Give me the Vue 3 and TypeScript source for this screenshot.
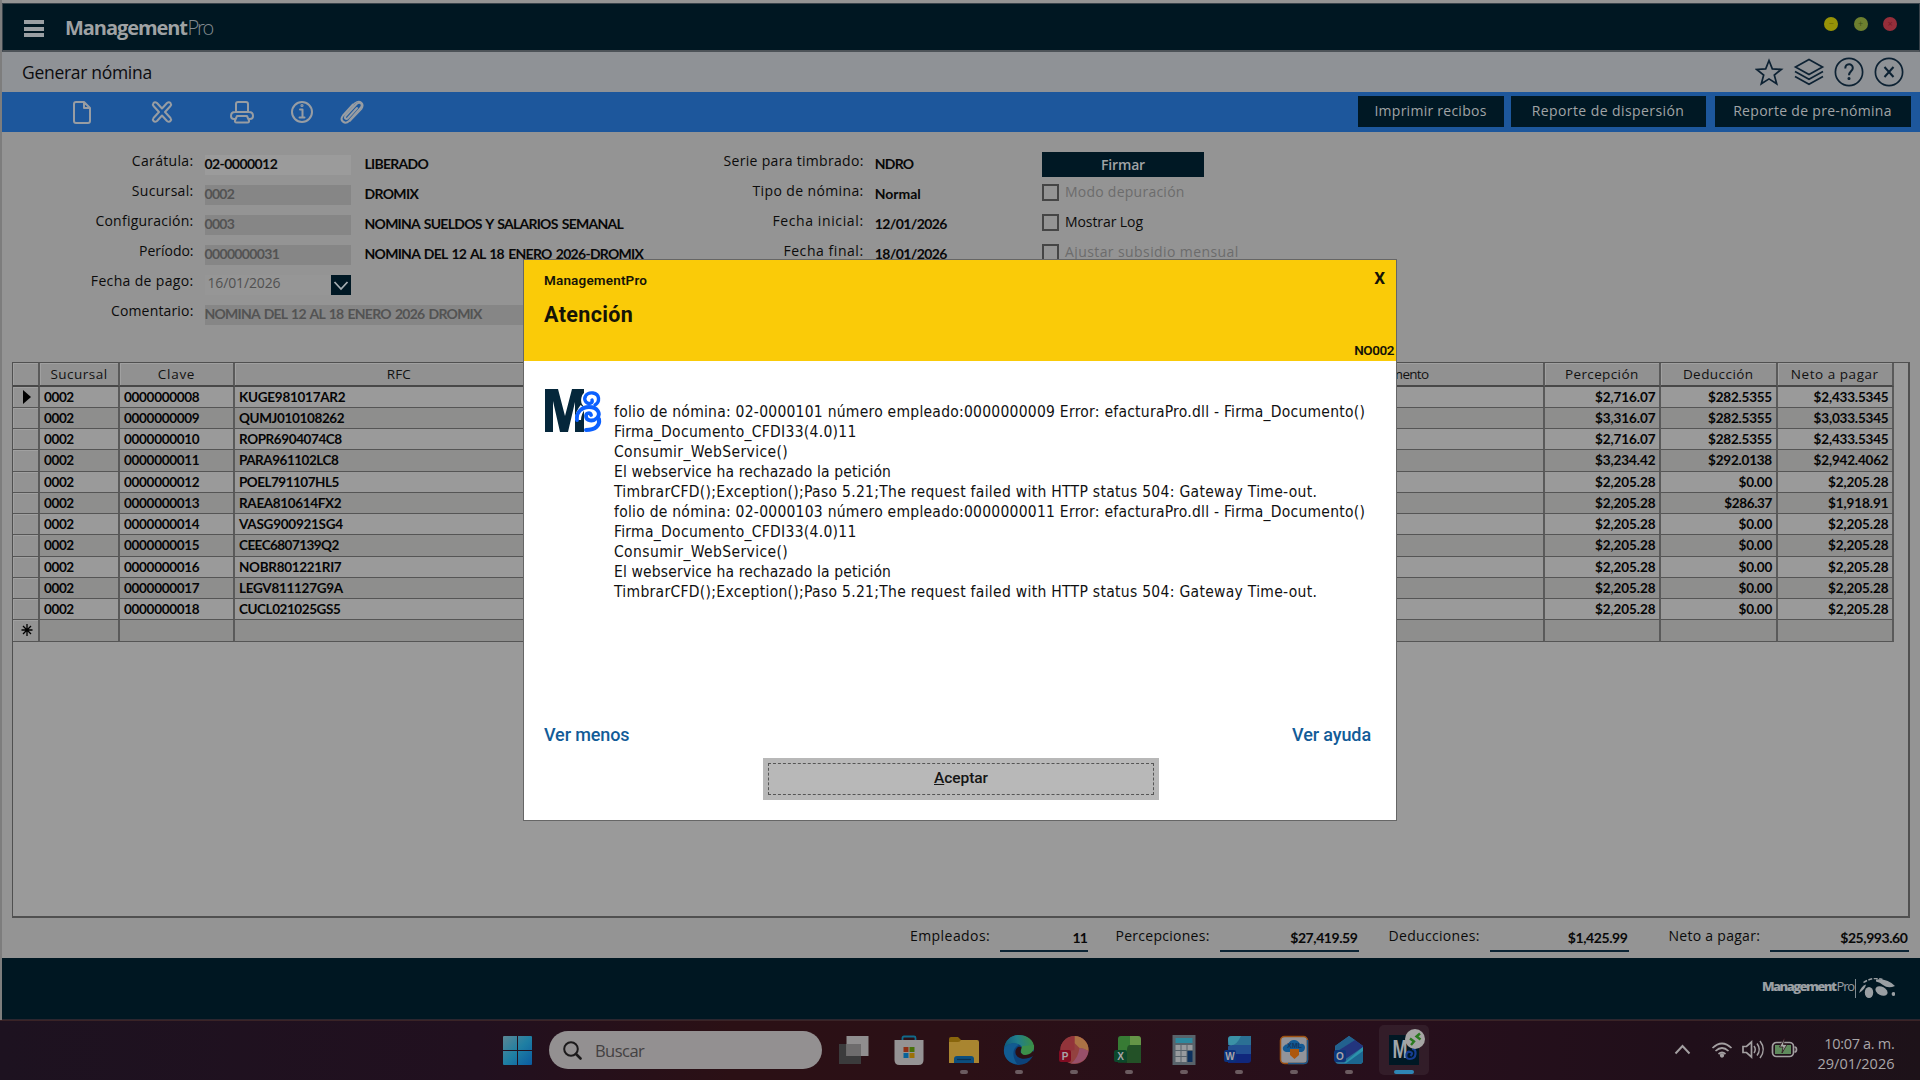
<script setup lang="ts">
interface Field { label: string; lw: number; value: string; vw: number; desc?: string; dw?: number; kind: string }
interface Pair { label: string; lw: number; value: string; vw: number }

// Spreads the letters of a text over the width given in pixels.
const vFit = {
  mounted(el: HTMLElement, binding: { value: number }) {
    const range = document.createRange()
    range.selectNodeContents(el)
    const natural = range.getBoundingClientRect().width
    const count = (el.textContent ?? '').length
    if (count > 1) el.style.letterSpacing = `${((binding.value - natural) / (count - 0.5)).toFixed(3)}px`
  },
}

const fields: Field[] = [
  { label: 'Carátula:', lw: 61.5, value: '02-0000012', vw: 73, desc: 'LIBERADO', dw: 64, kind: 'active' },
  { label: 'Sucursal:', lw: 61.5, value: '0002', vw: 30, desc: 'DROMIX', dw: 54, kind: 'off' },
  { label: 'Configuración:', lw: 98, value: '0003', vw: 30, desc: 'NOMINA SUELDOS Y SALARIOS SEMANAL', dw: 259, kind: 'off' },
  { label: 'Período:', lw: 54.5, value: '0000000031', vw: 75, desc: 'NOMINA DEL 12 AL 18 ENERO 2026-DROMIX', dw: 279, kind: 'off' },
  { label: 'Fecha de pago:', lw: 102.5, value: '16/01/2026', vw: 73, kind: 'date' },
  { label: 'Comentario:', lw: 82.5, value: 'NOMINA DEL 12 AL 18 ENERO 2026 DROMIX', vw: 277.5, kind: 'off wide' },
]
const series: Pair[] = [
  { label: 'Serie para timbrado:', lw: 140, value: 'NDRO', vw: 39 },
  { label: 'Tipo de nómina:', lw: 111, value: 'Normal', vw: 46 },
  { label: 'Fecha inicial:', lw: 91, value: '12/01/2026', vw: 72.5 },
  { label: 'Fecha final:', lw: 80, value: '18/01/2026', vw: 72.5 },
]
const checks = [
  { label: 'Modo depuración', w: 119.5, off: true },
  { label: 'Mostrar Log', w: 78, off: false },
  { label: 'Ajustar subsidio mensual', w: 173.5, off: true },
]
const reports = [
  { label: 'Imprimir recibos', w: 112, cls: 'r1' },
  { label: 'Reporte de dispersión', w: 152.5, cls: 'r2' },
  { label: 'Reporte de pre-nómina', w: 158.5, cls: 'r3' },
]
const rows: string[][] = [
  ['0000000008', 'KUGE981017AR2', '$2,716.07', '$282.5355', '$2,433.5345'],
  ['0000000009', 'QUMJ010108262', '$3,316.07', '$282.5355', '$3,033.5345'],
  ['0000000010', 'ROPR6904074C8', '$2,716.07', '$282.5355', '$2,433.5345'],
  ['0000000011', 'PARA961102LC8', '$3,234.42', '$292.0138', '$2,942.4062'],
  ['0000000012', 'POEL791107HL5', '$2,205.28', '$0.00', '$2,205.28'],
  ['0000000013', 'RAEA810614FX2', '$2,205.28', '$286.37', '$1,918.91'],
  ['0000000014', 'VASG900921SG4', '$2,205.28', '$0.00', '$2,205.28'],
  ['0000000015', 'CEEC6807139Q2', '$2,205.28', '$0.00', '$2,205.28'],
  ['0000000016', 'NOBR801221RI7', '$2,205.28', '$0.00', '$2,205.28'],
  ['0000000017', 'LEGV811127G9A', '$2,205.28', '$0.00', '$2,205.28'],
  ['0000000018', 'CUCL021025GS5', '$2,205.28', '$0.00', '$2,205.28'],
]
const rfcWidths = [106.5, 105.5, 103, 99.5, 100, 102.5, 104, 100, 102.5, 104, 101.5]
const totals = [
  { label: 'Empleados:', lw: 80, value: '11', vw: 15, cls: 't1' },
  { label: 'Percepciones:', lw: 94, value: '$27,419.59', vw: 67.5, cls: 't2' },
  { label: 'Deducciones:', lw: 91, value: '$1,425.99', vw: 60, cls: 't3' },
  { label: 'Neto a pagar:', lw: 91.5, value: '$25,993.60', vw: 67.5, cls: 't4' },
]
const block = (folio: string, emp: string) => [
  { t: `folio de nómina: 02-${folio} número empleado:${emp} Error: efacturaPro.dll - Firma_Documento()`, w: 751 },
  { t: 'Firma_Documento_CFDI33(4.0)11', w: 242.5 },
  { t: 'Consumir_WebService()', w: 174 },
  { t: 'El webservice ha rechazado la petición', w: 277 },
  { t: 'TimbrarCFD();Exception();Paso 5.21;The request failed with HTTP status 504: Gateway Time-out.', w: 703 },
]
const messages = [...block('0000101', '0000000009'), ...block('0000103', '0000000011')]
const money = (s: string) => (s.length === 5 ? 33.5 : s.length === 7 ? 48 : s.length === 9 && s[2] !== ',' ? 64 : s.length === 9 ? 60.5 : 75)
</script>

<template>
  <div class="screen">
    <div class="app">
      <header class="head">
        <div class="burger"><i></i><i></i><i></i></div>
        <div class="brand"><b v-fit="122.5">Management</b><span v-fit="25.5">Pro</span></div>
        <div class="dots"><i class="y">−</i><i class="g">+</i><i class="r">×</i></div>
      </header>

      <div class="titlebar">
        <span v-fit="130" class="title">Generar nómina</span>
        <svg class="tico" width="150" height="32" viewBox="0 0 150 32" fill="none" stroke="#0d2233" stroke-width="1.7">
          <path d="M14 4.500l3.300 8.400 9 .5-7 5.600 2.400 8.800L14 22.900l-7.700 4.900L8.700 19l-7-5.600 9-.5z" />
          <path d="M54 3.500l13.500 7.500L54 18.500 40.500 11z" />
          <path d="M40 15.500l14 7.700 14-7.700M40 20.500l14 7.700 14-7.700" />
          <circle cx="94" cy="16" r="13.600" /><circle cx="134" cy="16" r="13.600" />
          <path d="M90.300 12.500c0-5.500 7.500-5.500 7.500-.6 0 3.300-3.800 3.500-3.800 7.300" stroke-width="2" /><circle cx="94" cy="22.500" r=".7" />
          <path d="M129.500 11l9 10M138.500 11l-9 10" stroke-width="2" />
        </svg>
      </div>

      <div class="toolbar">
        <svg width="300" height="40" viewBox="0 0 300 40" fill="none" stroke="#989da3" stroke-width="2" stroke-linejoin="round" stroke-linecap="round">
          <path d="M4 10h8l6 6v13q0 2-2 2H4q-2 0-2-2V12q0-2 2-2zM12 10v6h6" />
          <path d="M85 11l5 5.500 5-5.500q2-1.500 3.500 0 1.200 1.500 0 3L93 20l5.500 6q1.200 1.500 0 3-1.500 1.500-3.500 0l-5-5.500-5 5.500q-2 1.500-3.500 0-1.200-1.500 0-3l5.500-6-5.500-6q-1.200-1.500 0-3 1.500-1.500 3.500 0z" />
          <path d="M164 20v-8q0-2 2-2h8q2 0 2 2v8M163 27h-1q-3 0-3-3 0-4 4-4h14q4 0 4 4 0 3-3 3h-1M165 24h10l2 4.500q.5 2-1.500 2h-11q-2 0-1.500-2z" />
          <circle cx="230" cy="20" r="10" /><path d="M228 17.500h2.500V25M227.500 25.500h5" /><circle cx="230" cy="13.500" r=".6" />
          <g transform="translate(-3 0)"><path d="M288 16l-9 10c-2 2-4 0-2.500-2l11-12c3-3 7 0 4.500 3.500L280 29c-4 4-10-.5-6-5.500l10-11" />
          <path d="M282.500 14.500l3.500-3.500c5-4 10 1 6.500 6L281 29" stroke-width="1.500" /></g>
        </svg>
        <div class="reports">
          <button v-for="r in reports" :key="r.label" :class="r.cls"><span v-fit="r.w">{{ r.label }}</span></button>
        </div>
      </div>

      <section class="form">
        <div class="col1">
          <div v-for="f in fields" :key="f.label" class="frow">
            <label><span v-fit="f.lw">{{ f.label }}</span></label>
            <div class="input" :class="f.kind"><span v-fit="f.vw">{{ f.value }}</span>
              <i v-if="f.kind === 'date'" class="drop"><svg width="20" height="20" viewBox="0 0 20 20" fill="none" stroke="#a5adb2" stroke-width="1.800"><path d="M3.500 7l6.500 7 6.500-7" /></svg></i>
            </div>
            <strong v-if="f.desc"><span v-fit="f.dw ?? 0">{{ f.desc }}</span></strong>
          </div>
        </div>
        <div class="col2">
          <div v-for="s in series" :key="s.label" class="frow">
            <label><span v-fit="s.lw">{{ s.label }}</span></label>
            <strong><span v-fit="s.vw">{{ s.value }}</span></strong>
          </div>
        </div>
        <div class="col3">
          <button class="sign"><span v-fit="44">Firmar</span></button>
          <div v-for="c in checks" :key="c.label" class="check" :class="{ dim: c.off }"><i></i><span v-fit="c.w">{{ c.label }}</span></div>
        </div>
      </section>

      <section class="box">
        <div class="grid">
          <div class="tr th">
            <div></div><div><span v-fit="57">Sucursal</span></div><div><span v-fit="37">Clave</span></div><div><span v-fit="24">RFC</span></div><div></div>
            <div><span v-fit="84">Departamento</span></div><div><span v-fit="73.5">Percepción</span></div><div><span v-fit="70.5">Deducción</span></div><div><span v-fit="87.5">Neto a pagar</span></div>
          </div>
          <div v-for="(r, i) in rows" :key="r[0]" class="tr">
            <div class="sel"><svg v-if="i === 0" width="8" height="14" viewBox="0 0 8 14"><path d="M0 0l8 7-8 7z" /></svg></div>
            <div><span v-fit="30">0002</span></div><div><span v-fit="75.5">{{ r[0] }}</span></div><div><span v-fit="rfcWidths[i]">{{ r[1] }}</span></div><div></div><div></div>
            <div v-for="k in [2, 3, 4]" :key="k" class="num"><span v-fit="money(r[k])">{{ r[k] }}</span></div>
          </div>
          <div class="tr">
            <div class="sel"><svg width="12" height="12" viewBox="0 0 12 12" stroke="#000" stroke-width="1.300"><path d="M6 0v12M.5 6h11M2 2l8 8M10 2l-8 8" /></svg></div>
            <div v-for="n in 8" :key="n"></div>
          </div>
        </div>
      </section>

      <section class="totals">
        <div v-for="t in totals" :key="t.label" class="total" :class="t.cls">
          <label><span v-fit="t.lw">{{ t.label }}</span></label>
          <strong><span v-fit="t.vw">{{ t.value }}</span></strong>
        </div>
      </section>

      <footer class="foot">
        <div class="fbrand"><b v-fit="74">Management</b><span v-fit="18">Pro</span></div>
        <svg width="42" height="22" viewBox="0 0 42 22" fill="#9a9fa3">
          <path d="M2.500 1v19" stroke="#7f8b92" />
          <path d="M10.500 4.500q9-6 19-3" stroke="#9a9fa3" stroke-width="1.500" stroke-dasharray="4 1.500" fill="none" />
          <path d="M6 15q2-7 7-8.500-1 5-7 8.500z" />
          <ellipse cx="16" cy="14.500" rx="4.200" ry="5.500" /><ellipse cx="28.500" cy="13" rx="6.500" ry="4.300" transform="rotate(28 28.500 13)" />
          <path d="M23 1.500q11-1.500 19 6.500-7 3-12-1-3-3-7-3.500z" /><circle cx="40.500" cy="16" r="1.900" />
        </svg>
      </footer>
    </div>

    <nav class="taskbar">
      <svg class="start" width="29" height="29" viewBox="0 0 29 29"><defs><linearGradient id="win" x1="0" y1="0" x2="1" y2="1"><stop offset="0" stop-color="#5b8794" /><stop offset=".5" stop-color="#1f7fa3" /><stop offset="1" stop-color="#0a5ba0" /></linearGradient></defs><path fill="url(#win)" d="M0 1q0-1 1-1h13v14H0zM15 0h13q1 0 1 1v13H15zM0 15h14v14H1q-1 0-1-1zM15 15h14v13q0 1-1 1H15z" /></svg>
      <div class="search"><svg width="19" height="19" viewBox="0 0 19 19" fill="none" stroke="#1c1a1b" stroke-width="2"><circle cx="8" cy="8" r="6.800" /><path d="M13 13l4.500 4.500" stroke-width="2.600" stroke-linecap="round" /></svg><span v-fit="49.5">Buscar</span></div>
      <div class="tasks">
        <div class="task"><svg width="32" height="32" viewBox="0 0 32 32"><path d="M1 10h22v20H1z" fill="#3b3b3c" /><path d="M8.500 2h22v20h-22z" fill="#908e8f" /><path d="M8.500 10H23v12H8.500z" fill="#6e6c6d" /></svg></div>
        <div class="task"><svg width="32" height="32" viewBox="0 0 32 32"><path d="M9.500 7V4q0-1.500 1.500-1.500h10q1.500 0 1.500 1.500v3" fill="none" stroke="#116a8b" stroke-width="1.800" /><path d="M1.500 6h29v20q0 5-5 5h-19q-5 0-5-5z" fill="#959394" /><path d="M10.500 13h5v5h-5z" fill="#8f3015" /><path d="M16.500 13h5v5h-5z" fill="#48710a" /><path d="M10.500 19h5v5h-5z" fill="#09629a" /><path d="M16.500 19h5v5h-5z" fill="#9b7107" /></svg></div>
        <div class="task"><svg width="32" height="32" viewBox="0 0 32 32"><path d="M1 5q0-2 2-2h7l3 3v8H1z" fill="#88650c" /><path d="M1 8h9q2 0 3-2h16q2 0 2 2v21H1z" fill="#a98530" /><path d="M6 29v-4q0-3 3-3h14q3 0 3 3v4z" fill="#0c4e7d" /><path d="M9 25.500h14" stroke="#092f50" stroke-width="1.200" /></svg><i></i></div>
        <div class="task"><svg width="32" height="32" viewBox="0 0 32 32"><defs><linearGradient id="edge" x1="0" y1=".6" x2="1" y2=".4"><stop offset="0" stop-color="#0f577d" /><stop offset=".5" stop-color="#217e8b" /><stop offset="1" stop-color="#3c8f42" /></linearGradient></defs><circle cx="16" cy="16" r="15" fill="#0c427a" /><path d="M1 15C2 6 8 1 16 1c9 0 15 6 15 12 0 5-4 8-9 8-3 0-4-1-4-3 1-1 2-3 1-5C16 8 5 8 1 15z" fill="url(#edge)" /><path d="M15 13c-3 2-4 7 0 10 4 3 10 2 15-1l2-4-3-1c-3 4-9 3-11 2-1-2 0-3 1-5 0 0-1-2-4-1z" fill="#2b1016" /><path d="M18 17c0-2 1-4 1-5l12-1c1 6-4 10-9 10-3 0-4-2-4-4z" fill="#3c8f4a" /><path d="M1 15c3-6 12-7 15-4-6 2-8 10-2 19C5 30 0 22 1 15z" fill="#125b91" /></svg><i></i></div>
        <div class="task"><svg width="32" height="32" viewBox="0 0 32 32"><circle cx="16.500" cy="16" r="14" fill="#93413f" /><path d="M16.500 2a14 14 0 0 1 14 15q-6-3-9-3l-5-5z" fill="#ab7245" /><path d="M5 8q5-6 11.500-6v14L3 19q-2-6 2-11z" fill="#93343a" /><path d="M13 29.500q7-5 8.500-15.500 4 0 9 3-2 13-17.500 12.500z" fill="#98506a" /><rect x="1" y="16" width="12" height="12" rx="2" fill="#810c22" /><text x="7" y="25.500">P</text></svg><i></i></div>
        <div class="task"><svg width="32" height="32" viewBox="0 0 32 32"><path d="M5 5q0-3 3-3h19v27H5z" fill="#153e22" /><path d="M5 5q0-3 3-3h9v18H5z" fill="#377b34" /><path d="M17 2h8q3 0 3 3v6H17z" fill="#659447" /><path d="M17 11h11v18H14V16q0-5 3-5z" fill="#235127" /><rect x="1" y="16" width="13" height="12" rx="2" fill="#0c482c" /><text x="7.500" y="25.500">X</text></svg><i></i></div>
        <div class="task"><svg width="32" height="32" viewBox="0 0 32 32"><path d="M4.500 1h23v30h-23z" fill="#58636b" /><path d="M7.500 4h17v5h-17z" fill="#2d899f" /><path d="M7.500 11h5v5h-5zM13.500 11h5v5h-5zM19.500 11h5v5h-5zM7.500 17h5v5h-5zM13.500 17h5v5h-5zM7.500 23h5v5h-5zM13.500 23h5v5h-5z" fill="#989b9e" /><path d="M19.500 17h5v11h-5z" fill="#0c315e" /></svg><i></i></div>
        <div class="task"><svg width="32" height="32" viewBox="0 0 32 32"><path d="M5 5q0-3 3-3h20v9H5z" fill="#2b7094" /><path d="M5 20V13q0-2 3-2h20v9z" fill="#224f91" /><path d="M5 20h23v6q0 3-3 3H5z" fill="#10277c" /><path d="M6 11q7 2 12-9H9q-4 0-4 4z" fill="#3b91a6" /><rect x="1" y="16" width="12" height="12" rx="2" fill="#0b317c" /><text x="7" y="25.500">W</text></svg><i></i></div>
        <div class="task"><svg width="32" height="32" viewBox="0 0 32 32"><rect x="2.500" y="2.500" width="27" height="27" rx="4" fill="#92949a" stroke="#9d5010" stroke-width="1.500" /><path d="M10 29.500h16q3.500 0 3.500-3.500V6" fill="none" stroke="#1a568b" stroke-width="1.500" /><path d="M8 18q-4-1-3-5 2-3 5-3 2-4 6-4t6 4q4-1 5 3 0 4-3 5z" fill="#135a94" /><path d="M12 15h9v6l-4.500 4-4.500-4z" fill="#ad570c" /><text x="16.500" y="14" class="xml">XML</text></svg><i></i></div>
        <div class="task"><svg width="32" height="32" viewBox="0 0 32 32"><path d="M2 12L16 2l14 10v14q0 4-4 4H6q-4 0-4-4z" fill="#2b6d96" /><path d="M2 12L16 2l6 4L3 18z" fill="#22618e" /><path d="M3 18L22 6l8 6v1L11 26z" fill="#23357e" /><path d="M11 29l19-16v13q0 4-4 4z" fill="#2b93ac" /><path d="M12 30l18-13v9q0 4-4 4z" fill="#1c6690" /><rect x="1" y="16" width="12" height="12" rx="2" fill="#0c377c" /><text x="7" y="25.500">O</text></svg><i></i></div>
        <div class="task running"><svg width="50" height="49" viewBox="0 0 50 49"><path d="M10 10h30v30H10z" fill="#001824" /><text x="21" y="33" class="em" textLength="15" lengthAdjust="spacingAndGlyphs">M</text><path d="M33 24q4 0 3.500 5t-6 5q-4 0-3-5 1-3 4-2t0 4" fill="none" stroke="#163e94" stroke-width="2.200" /><circle cx="36" cy="14" r="10" fill="#a5a5a4" /><path d="M31 13.500l4 3-3 3.500M41 8.500l-3.500 3 4 3" fill="none" stroke="#2a7a1f" stroke-width="2.400" /></svg><i></i></div>
      </div>
      <div class="tray">
        <svg width="125" height="24" viewBox="0 0 125 24" fill="none" stroke="#a39fa1" stroke-width="1.700">
          <path d="M1.500 16.500l7-7.500 7 7.500" stroke-width="2" />
          <path d="M38.500 11q9.500-9 19 0M41.500 14q6.500-6 13 0M44.500 17q3.500-3 7 0" /><circle cx="48" cy="18.500" r="1.300" fill="#a39fa1" />
          <path d="M69 9.500h3.500l5-4.500v15l-5-4.500H69z" /><path d="M80 9q2.500 3.500 0 7M83 6.500q4.500 6 0 12M86 4q6.500 8.500 0 17" stroke-width="1.500" />
          <rect x="98.500" y="5.500" width="21" height="14" rx="4" /><path d="M120.500 10q2 0 2 2.500t-2 2.500" /><path d="M101 8h16v9h-16z" fill="#5f8a5c" stroke="none" /><path d="M110.500 1l-5 9h3.500l-1 6 5-8.500h-3.500z" fill="#a7a9a5" stroke="#2a1019" stroke-width=".8" />
        </svg>
        <div class="clock"><span v-fit="70.5">10:07 a. m.</span><span v-fit="77">29/01/2026</span></div>
      </div>
    </nav>

    <div class="dialog">
      <div class="dhead">
        <div class="dtop"><span v-fit="103">ManagementPro</span><span class="close">X</span></div>
        <h2><span v-fit="89">Atención</span></h2>
        <div class="code"><span v-fit="40">NO002</span></div>
      </div>
      <div class="dbody">
        <svg width="57" height="44" viewBox="0 0 57 44"><path d="M0 0h13l7 27 7-27h12v43h-9V13l-7 30h-8L8 12v31H0z" fill="#05273b" /><path d="M30 43V24l8-7v26z" fill="#05273b" />
          <g fill="none" stroke="#fff" stroke-width="6"><path d="M53 15c3-6-2-12-8-11-6 1-8 9-3 12 4 2 8-2 5-5" /><path d="M38 18q-5 6-5 13" /></g>
          <g fill="none" stroke="#0b60ff" stroke-linecap="round"><path d="M50 16c5-3 5-11-2-12-7-1-10 5-7 9 3 3 7 1 6-2" stroke-width="3.400" /><path d="M32 31c-1-8 5-13 12-13 9 0 12 7 8 11-4 4-11 3-11-2 0-3 4-4 5-1" stroke-width="3.800" /><path d="M54 30c1 6-3 11-13 11" stroke-width="4" /></g></svg>
        <div class="msg"><div v-for="(m, i) in messages" :key="i"><span v-fit="m.w">{{ m.t }}</span></div></div>
      </div>
      <div class="links"><a v-fit="85.5">Ver menos</a><a v-fit="79">Ver ayuda</a></div>
      <button class="ok"><span><em v-fit="54"><u>A</u>ceptar</em></span></button>
    </div>
  </div>
</template>

<style>
html, body { margin: 0; background: #949494; overflow: hidden; }
</style>
<style scoped>
* { box-sizing: border-box; }
.screen { position: relative; width: 1920px; height: 1080px; overflow: hidden; font: 14px/20px "Open Sans", sans-serif; color: #0b0b0b; white-space: nowrap; }
button { border: 0; padding: 0; margin: 0; font: inherit; border-radius: 0; }
i, em { font-style: normal; }
svg { display: block; flex: none; }
strong { font: 700 14px/20px Lato, sans-serif; color: #080808; word-spacing: 1.500px; }
.app { width: 1920px; height: 1020px; background: #949494; padding-top: 3px; border-left: 2px solid #7d7d7d; display: flex; flex-direction: column; }
.head { height: 49px; flex: none; background: #001722; border: 1px solid #38424a; border-bottom: 2px solid #4d5358; display: flex; align-items: flex-start; }
.burger { margin: 16px 0 0 21px; width: 20px; display: flex; flex-direction: column; gap: 2.500px; }
.burger i { height: 4px; background: #9a9fa3; }
.brand { margin: 10px 0 0 21px; font: 20px/28px "Open Sans", sans-serif; color: #82898e; display: flex; font-weight: 300; }
.brand b { color: #9fa2a4; font-weight: 700; width: 122.500px; }
.dots { margin: 13px 22px 0 auto; display: flex; gap: 15.500px; }
.dots i { width: 14px; height: 14px; border-radius: 50%; font-size: 9px; line-height: 13px; text-align: center; }
.dots .y { background: #969207; color: #6a6705; } .dots .g { background: #6d7f2f; color: #3f5016; } .dots .r { background: #962e3a; color: #741b27; }
.titlebar { height: 40px; flex: none; background: #8f9296; display: flex; align-items: center; justify-content: space-between; padding: 0 15px 0 20px; }
.title { font-size: 17.500px; line-height: 40px; color: #0c0c0f; }
.toolbar { height: 40px; flex: none; background: #1d579c; display: flex; align-items: flex-start; justify-content: space-between; padding-left: 70px; }
.reports { display: flex; padding: 4px 9.500px 0 0; }
.reports button { height: 31px; background: #001824; color: #a0a4a6; line-height: 29px; padding-bottom: 2px; }
.r1 { width: 146px; margin-right: 7px; } .r2 { width: 195px; margin-right: 9px; } .r3 { width: 196px; }
.form { height: 229.500px; flex: none; display: flex; padding-top: 18px; }
.frow { height: 30px; display: flex; }
label { text-align: right; padding-top: 1px; }
.col1 { width: 700px; }
.col1 label { width: 191.500px; margin-right: 11px; flex: none; }
.input { width: 146px; height: 20px; margin-top: 5px; font: 700 14px/17px Lato, sans-serif; word-spacing: 1.500px; flex: none; display: flex; }
.active { background: #9b9b9b; }
.off { background: #868686; color: #535353; }
.wide { width: 330px; }
.date { background: #969696; color: #515151; font: 14px/15px "Open Sans", sans-serif; padding-left: 3px; }
.drop { margin-left: auto; background: #001824; height: 20px; }
.col1 strong { margin: 4px 0 0 14px; line-height: 19px; }
.col2 { width: 340px; }
.col2 label { width: 161.700px; margin-right: 11px; }
.col2 strong { margin-top: 4px; line-height: 19px; }
.col3 { padding-top: 2px; }
.sign { width: 162px; height: 25px; background: #001824; color: #a0a4a6; display: block; margin-bottom: 7px; font-weight: 600; line-height: 23px; }
.check { height: 30px; display: flex; }
.check i { width: 17px; height: 17px; border: 2px solid #454545; margin: 0 6px 0 0; }
.check span { line-height: 15px; }
.dim { color: #6c6c6c; }
.box { flex: none; margin-left: 10px; width: 1898px; height: 556px; border: 1px solid #505050; border-right-width: 2px; border-bottom-width: 2px; background: #9a9a9a; }
.tr { display: grid; width: 1881px; grid-template-columns: 27px 80px 115px 329.500px 666px 314px 116.500px 116.500px 116.500px; height: 21.250px; font: 700 13.500px/20px Lato, sans-serif; color: #050505; }
.tr > div { border-right: 2px solid #5a5a5a; border-bottom: 1.500px solid #555; padding: 0 4px; overflow: hidden; }
.tr:nth-child(odd) { background: #8e8e8d; }
.tr.th { height: 24px; font: 13.500px/23px "Open Sans", sans-serif; background: #919191; color: #111; text-align: center; }
.tr.th > div { border-bottom: 2px solid #484848; box-shadow: inset 1px 1px #a0a0a0; padding: 0; }
.tr > .sel, .tr.th > div:first-child { background: #939393; box-shadow: inset 1px 1px #a0a0a0; padding: 0 0 0 2px; display: grid; place-items: center; }
.tr > .num { text-align: right; padding-right: 3.500px; }
.totals { height: 40px; flex: none; display: flex; padding: 7px 0 0; }
.total { display: flex; height: 28px; }
.total label { flex: none; line-height: 20px; }
.total strong { border-bottom: 2px solid #0b2434; text-align: right; padding: 3.500px 1px 0 0; height: 27px; }
.t1 { margin-left: 908px; } .t1 strong { width: 88px; } .total.t1 label { width: 90px; text-align: left; }
.t2 { margin-left: 27.500px; } .t2 strong { width: 139px; } .total.t2 label { width: 104px; text-align: left; }
.t3 { margin-left: 30px; } .t3 strong { width: 139px; } .total.t3 label { width: 101px; text-align: left; }
.t4 { margin-left: 40px; } .t4 strong { width: 139px; } .total.t4 label { width: 101px; text-align: left; }
.foot { flex: 1; background: #001722; border-bottom: 1px solid #2a2630; display: flex; justify-content: flex-end; padding: 20px 25px 0 0; }
.fbrand { display: flex; font: 400 13px/17px "Open Sans", sans-serif; color: #999ea2; margin-right: -1px; }
.fbrand b { font-weight: 800; width: 74.500px; }
.taskbar { height: 60px; display: flex; align-items: flex-start; background: linear-gradient(90deg, #1d1220 0, #21101f 25%, #2b1015 38%, #2b1016 50%, #270f1c 72%, #200f1a 88%, #1d1219 100%); border-top: 1px solid #3a2326; }
.start { margin: 15px 17px 0 503px; }
.search { width: 273px; height: 38px; margin-top: 10px; border-radius: 19px; background: #939091; display: flex; align-items: center; padding-left: 14px; gap: 13px; font-size: 16.500px; color: #434142; }
.search span { padding-top: 1px; }
.tasks { display: flex; margin: 4px 0 0 6.500px; gap: 5px; }
.task { width: 50px; height: 50px; display: flex; flex-direction: column; align-items: center; padding-top: 9px; }
.task i { width: 8px; height: 4px; border-radius: 2px; background: #6b5b60; margin-top: 4px; }
.task text { font: 700 10px "Liberation Sans", sans-serif; fill: #a9a4a8; text-anchor: middle; }
.task text.xml { font-size: 7px; fill: #123660; }
.task text.em { font-size: 25px; fill: #a0a6aa; }
.running { background: rgba(255, 255, 255, .06); border-radius: 5px; padding: 0; }
.running i { width: 20px; background: #2f86b5; margin-top: -4px; }
.tray { margin-left: auto; display: flex; padding: 16px 25.500px 0 0; }
.tray svg { margin-right: 16.500px; }
.clock { width: 79px; display: flex; flex-direction: column; align-items: flex-end; font-size: 14.500px; line-height: 20px; color: #aaa6a8; margin-top: -3px; }
.dialog { position: absolute; left: 523px; top: 259px; width: 874px; height: 562px; background: #fff; border: 1px solid #666; display: flex; flex-direction: column; }
.dhead { height: 101px; flex: none; background: #facb08; padding: 0 2px 0 20px; color: #151307; font-family: Roboto, sans-serif; font-weight: 600; }
.dtop { display: flex; justify-content: space-between; font-size: 13.500px; padding: 10px 9px 0 0; line-height: 21px; }
.close { font-size: 17px; line-height: 16px; font-weight: 700; }
h2 { font-size: 21.500px; line-height: 26px; margin: 11px 0 0; font-weight: 700; }
.code { text-align: right; font-size: 13.500px; line-height: 16px; margin-top: 14px; }
.dbody { display: flex; padding: 28px 0 0 21px; height: 356px; }
.msg { margin: 13px 0 0 12px; font: 15.500px/20px "DejaVu Sans Condensed", "DejaVu Sans", sans-serif; color: #111; }
.links { display: flex; justify-content: space-between; padding: 7px 25px 0 20px; font: 500 18px/21px Roboto, sans-serif; color: #125c98; }
.ok { margin: 12.500px 0 0 239px; width: 396px; height: 42px; background: #b8b8b8; padding: 5px; }
.ok > span { display: block; height: 32px; border: 1.500px dashed #555; line-height: 28px; font: 500 15.500px/29px Roboto, sans-serif; color: #151515; }
</style>
